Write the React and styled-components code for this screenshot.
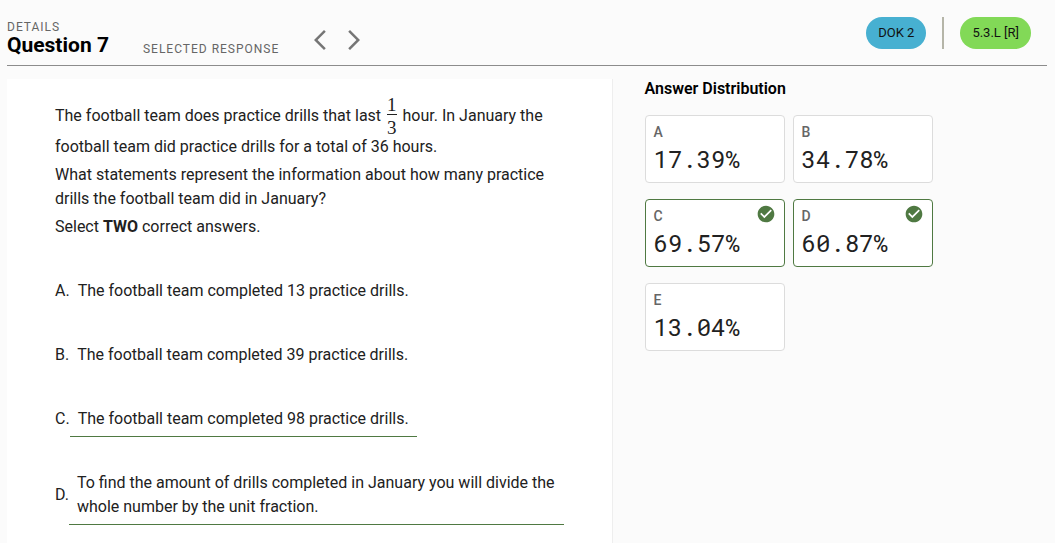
import React from 'react';
import styled, { createGlobalStyle } from 'styled-components';

const GlobalStyle = createGlobalStyle`
  * {
    box-sizing: border-box;
  }

  body {
    margin: 0;
    background: #fbfbfb;
    color: #212121;
    font-family: Roboto, "Liberation Sans", sans-serif;
    font-size: 16px;
    line-height: 24px;
  }
`;

const Page = styled.div`
  display: flex;
  flex-direction: column;
  min-height: 100vh;
  padding: 0 8px 0 7px;
`;

const Header = styled.header`
  display: flex;
  align-items: flex-start;
  justify-content: space-between;
  padding: 17px 16px 6px 0;
  border-bottom: 1px solid #8c8c8c;
`;

const HeaderGroup = styled.div`
  display: flex;
  align-items: flex-start;
`;

const Overline = styled.div`
  font-size: 12px;
  line-height: 20px;
  letter-spacing: 1px;
  text-transform: uppercase;
  color: #666;
`;

const Title = styled.h1`
  margin: 0;
  font-size: 21px;
  font-weight: 700;
  line-height: 16px;
  color: #000;
`;

const TypeLabel = styled(Overline)`
  margin-left: 34px;
  padding-top: 22px;
`;

const Nav = styled.nav`
  display: flex;
  gap: 10px;
  margin-left: 29px;
  padding-top: 11px;
`;

const NavButton = styled.button`
  display: flex;
  padding: 0;
  border: 0;
  background: none;
  color: #757575;
  cursor: pointer;
`;

const Tags = styled.div`
  display: flex;
  align-items: center;
  gap: 16px;
`;

const Chip = styled.span`
  height: 32px;
  padding: 0 12px;
  border-radius: 16px;
  background: ${(props) => props.$color};
  color: #111;
  font-size: 13px;
  line-height: 32px;
`;

const Divider = styled.span`
  width: 2px;
  height: 32px;
  background: #b5b5a8;
`;

const Content = styled.main`
  display: grid;
  grid-template-columns: 7fr 5fr;
  flex: 1;
  padding: 13px 2px 0 0;
`;

const QuestionPanel = styled.section`
  padding: 19px 48px 16px;
  border-right: 1px solid #eee;
  background: #fff;
`;

const Paragraph = styled.p`
  margin: 0 0 4px;
`;

const Fraction = styled.span`
  display: inline-flex;
  flex-direction: column;
  margin: -1px 2px;
  font-family: "Liberation Serif", serif;
  font-size: 19px;
  line-height: 16px;
  text-align: center;
  vertical-align: middle;
`;

const Numerator = styled.span`
  padding-bottom: 1px;
  border-bottom: 1px solid #212121;
`;

const Denominator = styled.span`
  padding-top: 5px;
`;

const Options = styled.ol`
  display: flex;
  flex-direction: column;
  align-items: flex-start;
  gap: 28px;
  margin: 34px 0 0;
  padding: 0;
  list-style: none;
`;

const Option = styled.li`
  display: flex;
  align-items: center;
`;

const OptionText = styled.div`
  padding: 6px 8px 5px;
  border-bottom: 1px solid ${(props) => (props.$correct ? '#4f7942' : 'transparent')};
`;

const Distribution = styled.aside`
  padding-left: 32px;
`;

const SectionTitle = styled.h2`
  margin: 0 0 16px;
  font-size: 16px;
  font-weight: 600;
  line-height: 20px;
  color: #000;
`;

const Cards = styled.div`
  display: grid;
  grid-template-columns: repeat(2, 140px);
  gap: 16px 8px;
`;

const Card = styled.div`
  position: relative;
  padding: 6px 8px;
  border: 1px solid ${(props) => (props.$correct ? '#4f7942' : '#dcdcdc')};
  border-radius: 4px;
  background: #fff;
`;

const CardLabel = styled.div`
  font-size: 14px;
  font-weight: 500;
  line-height: 20px;
  color: #666;
`;

const CardValue = styled.div`
  font-family: "Roboto Mono", "DejaVu Sans Mono", monospace;
  font-size: 24px;
  line-height: 34px;
`;

const CheckBadge = styled.svg`
  position: absolute;
  top: 4px;
  right: 8px;
  fill: #4f7942;
`;

const options = [
  { letter: 'A', text: 'The football team completed 13 practice drills.', share: '17.39%' },
  { letter: 'B', text: 'The football team completed 39 practice drills.', share: '34.78%' },
  { letter: 'C', text: 'The football team completed 98 practice drills.', share: '69.57%', correct: true },
  {
    letter: 'D',
    text: 'To find the amount of drills completed in January you will divide the whole number by the unit fraction.',
    share: '60.87%',
    correct: true,
  },
];

const shares = [...options, { letter: 'E', share: '13.04%' }];

const App = () => {
  return (
    <>
      <GlobalStyle />
      <Page>
        <Header>
          <HeaderGroup>
            <div>
              <Overline>Details</Overline>
              <Title>Question 7</Title>
            </div>
            <TypeLabel>Selected Response</TypeLabel>
            <Nav>
              <NavButton type="button" aria-label="Previous question">
                <svg width="24" height="24" viewBox="0 0 24 24" fill="currentColor">
                  <path d="M17.77 3.77 16 2 6 12l10 10 1.77-1.77L9.54 12z" />
                </svg>
              </NavButton>
              <NavButton type="button" aria-label="Next question">
                <svg width="24" height="24" viewBox="0 0 24 24" fill="currentColor">
                  <path d="M6.23 20.23 8 22l10-10L8 2 6.23 3.77 14.46 12z" />
                </svg>
              </NavButton>
            </Nav>
          </HeaderGroup>
          <Tags>
            <Chip $color="#47b0d1">DOK 2</Chip>
            <Divider />
            <Chip $color="#82d957">5.3.L [R]</Chip>
          </Tags>
        </Header>
        <Content>
          <QuestionPanel>
            <Paragraph>
              The football team does practice drills that last{' '}
              <Fraction>
                <Numerator>1</Numerator>
                <Denominator>3</Denominator>
              </Fraction>{' '}
              hour. In January the football team did practice drills for a total of 36 hours.
            </Paragraph>
            <Paragraph>
              What statements represent the information about how many practice drills the football
              team did in January?
            </Paragraph>
            <Paragraph>
              Select <strong>TWO</strong> correct answers.
            </Paragraph>
            <Options>
              {options.map(({ letter, text, correct }) => (
                <Option key={letter}>
                  <span>{letter}.</span>
                  <OptionText $correct={correct}>{text}</OptionText>
                </Option>
              ))}
            </Options>
          </QuestionPanel>
          <Distribution>
            <SectionTitle>Answer Distribution</SectionTitle>
            <Cards>
              {shares.map(({ letter, share, correct }) => (
                <Card key={letter} $correct={correct}>
                  <CardLabel>{letter}</CardLabel>
                  <CardValue>{share}</CardValue>
                  {correct && (
                    <CheckBadge width="20" height="20" viewBox="0 0 24 24">
                      <path d="M12 2C6.48 2 2 6.48 2 12s4.48 10 10 10 10-4.48 10-10S17.52 2 12 2m-2 15-5-5 1.41-1.41L10 14.17l7.59-7.59L19 8z" />
                    </CheckBadge>
                  )}
                </Card>
              ))}
            </Cards>
          </Distribution>
        </Content>
      </Page>
    </>
  );
};

export default App;
